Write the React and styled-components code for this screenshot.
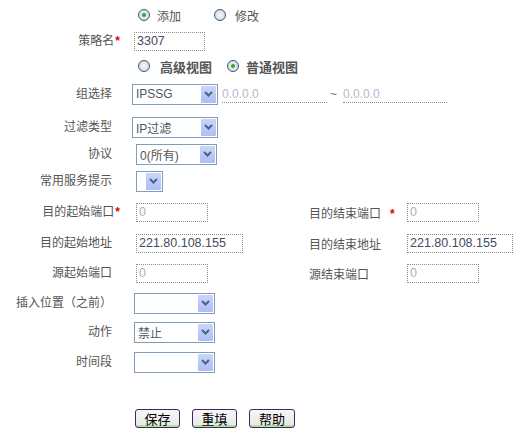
import React from "react";
import styled, { createGlobalStyle } from "styled-components";

const GlobalStyle = createGlobalStyle`
  body {
    margin: 0;
    background: #fff;
    font-family: "Liberation Sans", "Noto Sans CJK SC", sans-serif;
    font-size: 12px;
    color: #555;
  }
`;

const Form = styled.div`
  width: 521px;
  padding-top: 4px;
`;

const Row = styled.div`
  display: grid;
  grid-template-columns: 125px 1fr;
  align-items: center;
  height: ${(p) => p.$h}px;
`;

const Label = styled.div`
  text-align: right;
  padding-right: 13px;
  white-space: nowrap;
  line-height: 14px;
`;

const Star = styled.span`
  color: #e00000;
  font-weight: bold;
  margin-right: -8px;
  margin-left: 1px;
`;

const Cell = styled.div`
  display: flex;
  align-items: center;
  padding-left: ${(p) => p.$indent || 0}px;
`;

const Pair = styled.div`
  display: grid;
  grid-template-columns: 173px 98px auto;
  align-items: center;
  padding-left: 11px;
`;

const SideLabel = styled.div`
  white-space: nowrap;
`;

const SideStar = styled.span`
  color: #e00000;
  font-weight: bold;
  margin-left: 9px;
`;

const RadioItem = styled.label`
  display: flex;
  align-items: center;
  gap: ${(p) => p.$gap || 7}px;
  margin-right: ${(p) => p.$after || 0}px;
  font-size: ${(p) => (p.$bold ? 13 : 12)}px;
  font-weight: ${(p) => (p.$bold ? "bold" : "normal")};
  color: #555;
`;

const RadioDot = styled.span`
  width: 10px;
  height: 10px;
  border-radius: 50%;
  border: 1px solid #2c5a8c;
  background: radial-gradient(circle at 50% 50%, #f6f6f6 0, #d8d8d8 80%);
  display: flex;
  align-items: center;
  justify-content: center;

  &::after {
    content: "";
    width: 4px;
    height: 4px;
    border-radius: 50%;
    background: ${(p) => (p.$on ? "#20a830" : "transparent")};
  }
`;

const TextBox = styled.div`
  box-sizing: border-box;
  width: ${(p) => p.$w}px;
  height: 19px;
  border: 1px dotted #8c8c8c;
  background: #fff;
  padding-left: 2px;
  display: flex;
  align-items: center;
  font-size: 12.5px;
  color: ${(p) => (p.$faint ? "#b0b0b0" : "#444a60")};
`;

const LineBox = styled.div`
  box-sizing: border-box;
  width: ${(p) => p.$w}px;
  height: 18px;
  border-bottom: 1px dotted #8a8a8a;
  display: flex;
  align-items: center;
  color: #b4b8cc;
  font-size: 12px;
  margin-left: ${(p) => p.$gap || 0}px;
`;

const Tilde = styled.span`
  color: #777;
  margin-left: 3px;
  margin-right: 6px;
`;

const SelectBox = styled.div`
  box-sizing: border-box;
  width: ${(p) => p.$w}px;
  height: 21px;
  border: 1px solid #7f9db9;
  background: #fff;
  display: flex;
  align-items: center;
  justify-content: space-between;
  padding: 0 1px 0 3px;
`;

const SelectValue = styled.span`
  color: #555;
  font-size: 12px;
  white-space: nowrap;
`;

const SelectArrow = styled.span`
  width: 15px;
  height: 17px;
  background: linear-gradient(to bottom, #c9d6fb, #aebdf4);
  border-radius: 1px;
  display: flex;
  align-items: center;
  justify-content: center;
`;

const Chevron = () => (
  <svg width="9" height="6" viewBox="0 0 9 6">
    <path d="M1 1 L4.5 4.5 L8 1" stroke="#4d6185" strokeWidth="2" fill="none" />
  </svg>
);

const Select = ({ w, value }) => (
  <SelectBox $w={w}>
    <SelectValue>{value}</SelectValue>
    <SelectArrow>
      <Chevron />
    </SelectArrow>
  </SelectBox>
);

const Buttons = styled.div`
  display: flex;
  gap: 12px;
  padding-left: 135px;
  margin-top: 31px;
`;

const Button = styled.button`
  box-sizing: border-box;
  width: ${(p) => p.$w || 45}px;
  height: 19px;
  padding: 0;
  border: 1px solid #45236b;
  border-radius: 3px;
  background: linear-gradient(
    to bottom,
    #f7f7f7 0,
    #e9e9e9 calc(100% - 2px),
    #a6e890 calc(100% - 2px),
    #a6e890 100%
  );
  font-family: "Noto Sans CJK SC", sans-serif;
  font-size: 13px;
  line-height: 15px;
  color: #000;
`;

export default function App() {
  return (
    <>
      <GlobalStyle />
      <Form>
        <Row $h={22}>
          <Label />
          <Cell $indent={13}>
            <RadioItem $after={33}>
              <RadioDot $on />
              添加
            </RadioItem>
            <RadioItem $gap={9}>
              <RadioDot />
              修改
            </RadioItem>
          </Cell>
        </Row>
        <Row $h={30}>
          <Label>
            策略名<Star>*</Star>
          </Label>
          <Cell $indent={9}>
            <TextBox $w={71}>3307</TextBox>
          </Cell>
        </Row>
        <Row $h={20}>
          <Label />
          <Cell $indent={13}>
            <RadioItem $bold $gap={10} $after={15}>
              <RadioDot />
              高级视图
            </RadioItem>
            <RadioItem $bold $gap={7}>
              <RadioDot $on />
              普通视图
            </RadioItem>
          </Cell>
        </Row>
        <Row $h={36}>
          <Label>组选择</Label>
          <Cell $indent={7}>
            <Select w={86} value="IPSSG" />
            <LineBox $w={105} $gap={4}>0.0.0.0</LineBox>
            <Tilde>~</Tilde>
            <LineBox $w={104}>0.0.0.0</LineBox>
          </Cell>
        </Row>
        <Row $h={30}>
          <Label>过滤类型</Label>
          <Cell $indent={7}>
            <Select w={86} value="IP过滤" />
          </Cell>
        </Row>
        <Row $h={24}>
          <Label>协议</Label>
          <Cell $indent={11}>
            <Select w={81} value="0(所有)" />
          </Cell>
        </Row>
        <Row $h={30}>
          <Label>常用服务提示</Label>
          <Cell $indent={11}>
            <Select w={27} value="" />
          </Cell>
        </Row>
        <Row $h={32}>
          <Label>
            目的起始端口<Star>*</Star>
          </Label>
          <Pair>
            <TextBox $w={72} $faint>
              0
            </TextBox>
            <SideLabel>
              目的结束端口<SideStar>*</SideStar>
            </SideLabel>
            <TextBox $w={72} $faint>
              0
            </TextBox>
          </Pair>
        </Row>
        <Row $h={30}>
          <Label>目的起始地址</Label>
          <Pair>
            <TextBox $w={107}>221.80.108.155</TextBox>
            <SideLabel>目的结束地址</SideLabel>
            <TextBox $w={106}>221.80.108.155</TextBox>
          </Pair>
        </Row>
        <Row $h={30}>
          <Label>源起始端口</Label>
          <Pair>
            <TextBox $w={72} $faint>
              0
            </TextBox>
            <SideLabel>源结束端口</SideLabel>
            <TextBox $w={72} $faint>
              0
            </TextBox>
          </Pair>
        </Row>
        <Row $h={30}>
          <Label>插入位置（之前）</Label>
          <Cell $indent={9}>
            <Select w={81} value="" />
          </Cell>
        </Row>
        <Row $h={28}>
          <Label>动作</Label>
          <Cell $indent={9}>
            <Select w={81} value="禁止" />
          </Cell>
        </Row>
        <Row $h={32}>
          <Label>时间段</Label>
          <Cell $indent={9}>
            <Select w={81} value="" />
          </Cell>
        </Row>
        <Buttons>
          <Button>保存</Button>
          <Button>重填</Button>
          <Button $w={46}>帮助</Button>
        </Buttons>
      </Form>
    </>
  );
}
